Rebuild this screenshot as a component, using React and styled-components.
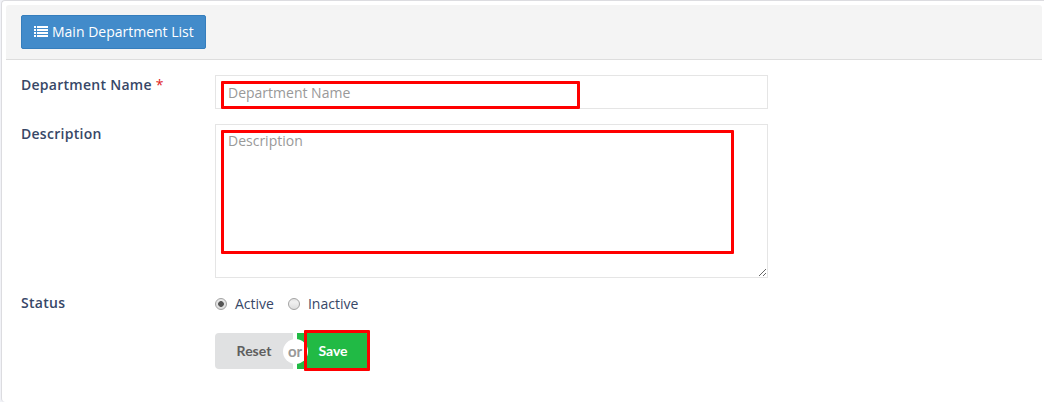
import React from "react";
import styled, { createGlobalStyle } from "styled-components";

const GlobalStyle = createGlobalStyle`
  *, *::before, *::after { box-sizing: border-box; }
  html, body { margin: 0; height: 100%; overflow: hidden; }
  body {
    background: #f1f2f7;
    font: 14px/20px "Open Sans", sans-serif;
    color: #374767;
  }
`;

const Panel = styled.main`
  height: 402px;
  margin-left: 1px;
  padding: 4px 2px 0 4px;
  background: #fff;
  border: 1px solid #dcdce0;
  border-right: 0;
  border-bottom: 0;
  border-radius: 4px 0 0 4px;
`;

const Header = styled.header`
  height: 55px;
  padding: 10px 15px;
  background: #f4f4f4;
  border-bottom: 1px solid #ddd;
  border-radius: 3px 3px 0 0;
`;

const ListButton = styled.button`
  display: flex;
  align-items: center;
  gap: 4px;
  width: 185px;
  height: 34px;
  padding: 0 0 0 12px;
  border: 1px solid #357ebd;
  border-radius: 2px;
  background: #428bca;
  color: #fff;
  font: inherit;
  white-space: nowrap;
`;

const Form = styled.form`
  padding: 15px;
`;

const Row = styled.div`
  display: grid;
  grid-template-columns: 194px 553px;
  margin-bottom: 15px;
`;

const Label = styled.label`
  font-weight: 600;
  letter-spacing: 0.27px;
`;

const Required = styled.span`
  color: #e02222;
  font-weight: 400;
`;

const Field = styled.div`
  position: relative;
  display: flex;
`;

const TextInput = styled.input`
  width: 100%;
  height: 34px;
  padding: 1px 12px 0;
  border: 1px solid #e5e5e5;
  background: #fff;
  font: inherit;
  outline: 0;
  &::placeholder { color: #999; opacity: 1; }
`;

const TextArea = styled(TextInput).attrs({ as: "textarea" })`
  height: 154px;
  padding: 6px 12px;
  resize: both;
`;

const Highlight = styled.span`
  position: absolute;
  left: ${(p) => p.$x}px;
  top: ${(p) => p.$y}px;
  width: ${(p) => p.$w}px;
  height: ${(p) => p.$h}px;
  border: 3px solid #f00;
  border-radius: 1px;
  pointer-events: none;
`;

const Options = styled.div`
  display: flex;
  gap: 14px;
  height: 25px;
  align-items: flex-start;
`;

const Option = styled.label`
  display: flex;
  align-items: center;
  gap: 8px;
  height: 22px;
`;

const Radio = styled.input.attrs({ type: "radio" })`
  appearance: none;
  width: 12px;
  height: 12px;
  margin: 0;
  border: 1px solid #a3a3a3;
  border-radius: 50%;
  background: linear-gradient(#e2e2e2, #f1f1f1 30%, #dedede);
  &:checked {
    background: radial-gradient(circle, #555 0 2.5px, transparent 3.2px),
      linear-gradient(#e8e8e8, #ddd);
  }
`;

const Actions = styled.div`
  position: relative;
  display: flex;
  gap: 4px;
  width: 155px;
  margin-left: 194px;
`;

const ActionButton = styled.button`
  width: ${(p) => (p.$primary ? 73 : 78)}px;
  height: 36px;
  padding: ${(p) => (p.$primary ? "0 1px 2px 0" : "0 0 2px")};
  border: 0;
  border-radius: ${(p) => (p.$primary ? "0 4px 4px 0" : "4px 0 0 4px")};
  background: ${(p) => (p.$primary ? "#21ba45" : "#e0e1e2")};
  color: ${(p) => (p.$primary ? "#fff" : "#5e5e5e")};
  font: 700 14px Lato, sans-serif;
`;

const Or = styled.span`
  position: absolute;
  left: 68px;
  top: 6px;
  width: 25px;
  height: 25px;
  padding-right: 1px;
  border-radius: 50%;
  background: #fff;
  color: #999;
  font: 700 15px/25px Lato, sans-serif;
  text-align: center;
`;

const ListIcon = () => (
  <svg width="14" height="12" viewBox="0 0 14 12" fill="#fff" shapeRendering="crispEdges">
    {[0, 3, 6, 9].map((y) => (
      <g key={y}>
        <rect x="0" y={y} width="2" height="2" />
        <rect x="3" y={y} width="11" height="2" />
      </g>
    ))}
  </svg>
);

export default function App() {
  return (
    <>
      <GlobalStyle />
      <Panel>
        <Header>
          <ListButton type="button"><ListIcon />Main Department List</ListButton>
        </Header>
        <Form>
          <Row>
            <Label htmlFor="name">Department Name <Required>*</Required></Label>
            <Field>
              <TextInput id="name" placeholder="Department Name" />
              <Highlight $x={6} $y={6} $w={359} $h={28} />
            </Field>
          </Row>
          <Row>
            <Label htmlFor="description">Description</Label>
            <Field>
              <TextArea id="description" placeholder="Description" />
              <Highlight $x={6} $y={6} $w={513} $h={124} />
            </Field>
          </Row>
          <Row>
            <Label as="span">Status</Label>
            <Options>
              <Option><Radio name="status" defaultChecked />Active</Option>
              <Option><Radio name="status" />Inactive</Option>
            </Options>
          </Row>
          <Actions>
            <ActionButton type="button">Reset</ActionButton>
            <ActionButton type="button" $primary>Save</ActionButton>
            <Or>or</Or>
            <Highlight $x={89} $y={-3} $w={66} $h={41} />
          </Actions>
        </Form>
      </Panel>
    </>
  );
}
